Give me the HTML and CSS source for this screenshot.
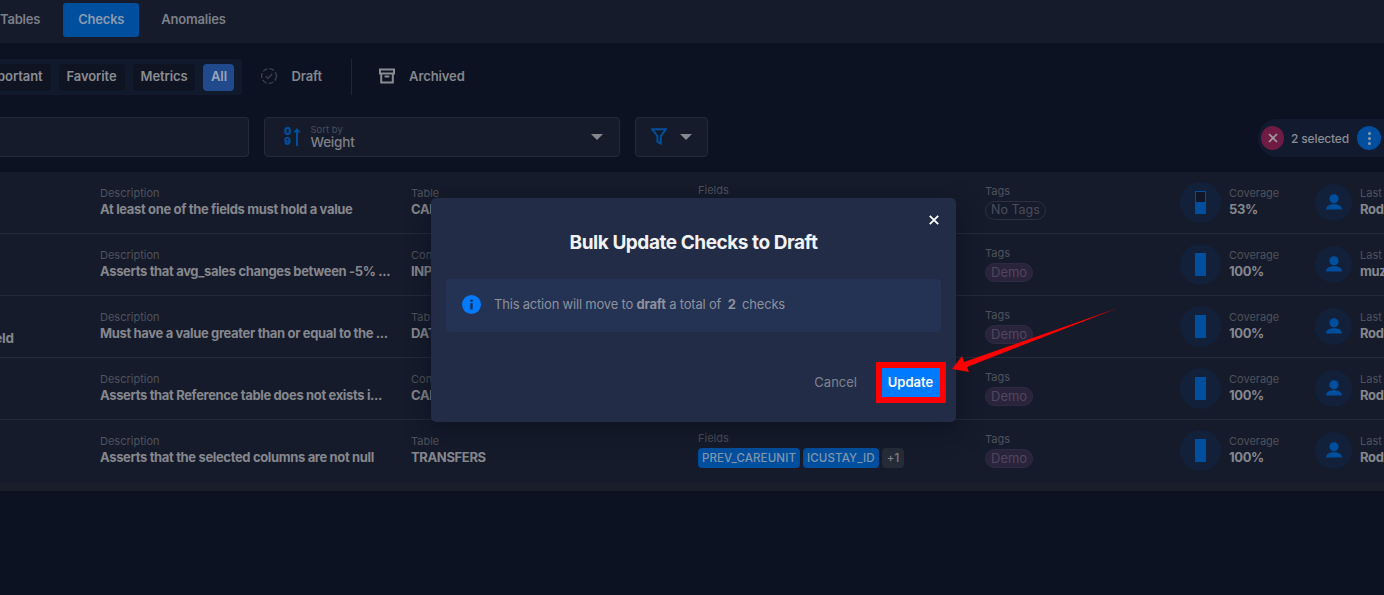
FILE: index.html
```html
<!DOCTYPE html>
<html lang="en">
<head>
<meta charset="utf-8">
<title>Checks</title>
<link rel="stylesheet" href="styles.css">
</head>
<body>
<div class="page">
  <nav class="tabs">
    <span class="tab tab-tables">Tables</span>
    <span class="tab tab-active">Checks</span>
    <span class="tab">Anomalies</span>
  </nav>

  <div class="filters">
    <div class="pill-group">
      <span class="pill pill-cut">Important</span>
      <span class="pill">Favorite</span>
      <span class="pill">Metrics</span>
      <span class="pill pill-on">All</span>
    </div>
    <div class="status status-draft">
      <svg class="i-draft" viewBox="0 0 18 18" width="18" height="18" fill="none" stroke="#3d424f" stroke-width="1.3"><circle cx="9" cy="9" r="7.4" stroke-dasharray="5 2"/><path d="M5.8 9.2l2.2 2.2 4.2-4.4"/></svg>
      <span>Draft</span>
    </div>
    <div class="divider"></div>
    <div class="status status-archived">
      <svg viewBox="0 0 16 16" width="16" height="16" fill="none" stroke="#8a8c92" stroke-width="2"><path d="M1 1.5h14v4H1zM2.2 5.5V14.5h11.6V5.5M5.6 8.6h4.8"/></svg>
      <span>Archived</span>
    </div>
  </div>

  <div class="controls">
    <div class="search"></div>
    <div class="sort">
      <span class="sort-icon">
        <span class="digits"><span>0</span><span>9</span></span>
        <svg viewBox="0 0 8 18" width="8" height="18" fill="#004f9e"><path d="M4 0l3.8 4.6H5V18H3V4.6H.2z"/></svg>
      </span>
      <span class="sort-text"><small>Sort by</small><b>Weight</b></span>
      <span class="caret caret-sort"></span>
    </div>
    <div class="filter-btn">
      <svg viewBox="0 0 16 18" width="16" height="18" fill="none" stroke="#004f9e" stroke-width="2"><path d="M1 1.2h14L9.8 8v7.6L6.4 13.6V8z"/></svg>
      <span class="caret"></span>
    </div>
    <div class="selected">
      <span class="sel-x"><svg viewBox="0 0 10 10" width="10" height="10" stroke="#a39aa0" stroke-width="1.7"><path d="M1 1l8 8M9 1l-8 8"/></svg></span>
      <span class="sel-text">2 selected</span>
      <span class="sel-more"><i></i><i></i><i></i></span>
    </div>
  </div>

  <div class="table">
    <div class="row">
      <div class="c0"></div>
      <div class="cell"><label>Description</label><strong>At least one of the fields must hold a value</strong></div>
      <div class="cell"><label>Table</label><strong>CAI</strong></div>
      <div class="cell cell-f"><label>Fields</label></div>
      <div class="cell cell-t"><label>Tags</label><span class="tag tag-none">No Tags</span></div>
      <div class="cov"><span class="bat"><span class="bat-fill f53"></span></span></div>
      <div class="cell"><label>Coverage</label><strong>53%</strong></div>
      <div class="usr"><svg viewBox="0 0 20 20" width="20" height="20" fill="#004f9e"><circle cx="10" cy="5.8" r="4.6"/><path d="M2 16.5c0-3.6 3.6-5.2 8-5.2s8 1.6 8 5.2z"/></svg></div>
      <div class="cell"><label>Last Editor</label><strong>Rodrigo</strong></div>
    </div>
    <div class="row">
      <div class="c0"></div>
      <div class="cell"><label>Description</label><strong>Asserts that avg_sales changes between -5% ...</strong></div>
      <div class="cell"><label>Con</label><strong>INP</strong></div>
      <div class="cell cell-f"></div>
      <div class="cell cell-t"><label>Tags</label><span class="tag">Demo</span></div>
      <div class="cov"><span class="bat"><span class="bat-fill"></span></span></div>
      <div class="cell"><label>Coverage</label><strong>100%</strong></div>
      <div class="usr"><svg viewBox="0 0 20 20" width="20" height="20" fill="#004f9e"><circle cx="10" cy="5.8" r="4.6"/><path d="M2 16.5c0-3.6 3.6-5.2 8-5.2s8 1.6 8 5.2z"/></svg></div>
      <div class="cell"><label>Last Editor</label><strong>muzammil</strong></div>
    </div>
    <div class="row">
      <div class="c0 c0-text">Field</div>
      <div class="cell"><label>Description</label><strong>Must have a value greater than or equal to the ...</strong></div>
      <div class="cell"><label>Tab</label><strong>DAT</strong></div>
      <div class="cell cell-f"></div>
      <div class="cell cell-t"><label>Tags</label><span class="tag">Demo</span></div>
      <div class="cov"><span class="bat"><span class="bat-fill"></span></span></div>
      <div class="cell"><label>Coverage</label><strong>100%</strong></div>
      <div class="usr"><svg viewBox="0 0 20 20" width="20" height="20" fill="#004f9e"><circle cx="10" cy="5.8" r="4.6"/><path d="M2 16.5c0-3.6 3.6-5.2 8-5.2s8 1.6 8 5.2z"/></svg></div>
      <div class="cell"><label>Last Editor</label><strong>Rodrigo</strong></div>
    </div>
    <div class="row">
      <div class="c0"></div>
      <div class="cell"><label>Description</label><strong>Asserts that Reference table does not exists i...</strong></div>
      <div class="cell"><label>Con</label><strong>CAL</strong></div>
      <div class="cell cell-f"></div>
      <div class="cell cell-t"><label>Tags</label><span class="tag">Demo</span></div>
      <div class="cov"><span class="bat"><span class="bat-fill"></span></span></div>
      <div class="cell"><label>Coverage</label><strong>100%</strong></div>
      <div class="usr"><svg viewBox="0 0 20 20" width="20" height="20" fill="#004f9e"><circle cx="10" cy="5.8" r="4.6"/><path d="M2 16.5c0-3.6 3.6-5.2 8-5.2s8 1.6 8 5.2z"/></svg></div>
      <div class="cell"><label>Last Editor</label><strong>Rodrigo</strong></div>
    </div>
    <div class="row row-last">
      <div class="c0"></div>
      <div class="cell"><label>Description</label><strong>Asserts that the selected columns are not null</strong></div>
      <div class="cell"><label>Table</label><strong>TRANSFERS</strong></div>
      <div class="cell cell-f"><label>Fields</label><div class="chips"><span class="chip">PREV_CAREUNIT</span><span class="chip">ICUSTAY_ID</span><span class="chip chip-more">+1</span></div></div>
      <div class="cell cell-t"><label>Tags</label><span class="tag">Demo</span></div>
      <div class="cov"><span class="bat"><span class="bat-fill"></span></span></div>
      <div class="cell"><label>Coverage</label><strong>100%</strong></div>
      <div class="usr"><svg viewBox="0 0 20 20" width="20" height="20" fill="#004f9e"><circle cx="10" cy="5.8" r="4.6"/><path d="M2 16.5c0-3.6 3.6-5.2 8-5.2s8 1.6 8 5.2z"/></svg></div>
      <div class="cell"><label>Last Editor</label><strong>Rodrigo</strong></div>
    </div>
    <div class="scroll-strip"></div>
  </div>

  <div class="modal">
    <svg class="modal-close" viewBox="0 0 10 10" width="10" height="10" stroke="#fff" stroke-width="1.8"><path d="M.8.8l8.4 8.4M9.2.8L.8 9.2"/></svg>
    <h2>Bulk Update Checks to Draft</h2>
    <div class="notice">
      <svg viewBox="0 0 20 20" width="19" height="19"><circle cx="10" cy="10" r="10" fill="#007bff"/><rect x="8.8" y="8.6" width="2.4" height="6.6" fill="#1f2b4a"/><rect x="8.8" y="4.8" width="2.4" height="2.4" fill="#1f2b4a"/></svg>
      <p>This action will move to <b>draft</b> a total of <b class="num">2</b> checks</p>
    </div>
    <div class="actions">
      <span class="cancel">Cancel</span>
      <span class="update-frame"><span class="update">Update</span></span>
    </div>
  </div>

  <svg class="arrow" viewBox="0 0 180 70" width="180" height="70"><polygon fill="#ff0000" points="172,2 21,61 23,66 6,63 16,50 18,56"/></svg>
</div>
</body>
</html>
```
FILE: styles.css
```css
* { box-sizing: border-box; }
html, body { margin: 0; height: 100%; }
body { background: #0d1222; overflow: hidden; font-family: Inter, "Liberation Sans", sans-serif; }
.page { position: relative; width: 1384px; height: 595px; overflow: hidden; }

.tabs { height: 43px; background: #151b2b; display: flex; align-items: flex-start; padding-top: 3px; }
.tab { height: 34px; display: flex; align-items: center; padding: 0 23px 2px 22px; font-size: 13px; font-weight: 600; letter-spacing: -.2px; color: #7c7f87; border-radius: 3px; }
.tab-tables { padding: 0 0 2px; margin-right: 23px; }
.tab-active { width: 76px; padding: 0 0 2px; justify-content: center; background: #004f9e; color: #8a9bb0; }

.filters { height: 66px; display: flex; align-items: flex-start; padding-top: 16px; }
.pill-group { display: flex; align-items: center; gap: 8px; height: 36px; padding: 0 8px 0 0; margin-left: -26px; background: #111a2c; border-radius: 0 4px 4px 0; }
.pill { height: 27px; display: flex; align-items: center; padding: 0 8px 2px; font-size: 13px; font-weight: 600; letter-spacing: -.1px; color: #8a8c92; background: #0f1423; border-radius: 4px; }
.pill-on { background: #214a8c; color: #9aa6ba; width: 31px; padding: 0 0 2px; justify-content: center; }
.status { display: flex; align-items: center; height: 36px; padding-bottom: 2px; font-size: 13px; font-weight: 600; letter-spacing: -.1px; color: #84868c; }
.status-draft { margin-left: 18px; gap: 13px; }
.divider { width: 1px; height: 36px; background: #20263a; margin: 0 27px 0 29px; }
.status-archived { gap: 14px; }

.controls { height: 63px; display: flex; align-items: flex-start; padding-top: 8px; }
.search { width: 249px; height: 40px; margin-right: 15px; background: #151b2b; border: 1px solid #252a38; border-left: 0; border-radius: 0 4px 4px 0; }
.sort { width: 356px; height: 40px; margin-right: 15px; background: #151b2b; border: 1px solid #252a38; border-radius: 4px; display: flex; align-items: center; padding: 0 16px 0 19px; }
.sort-icon { display: flex; align-items: center; gap: 2px; margin-right: 9px; }
.digits { display: flex; flex-direction: column; font-size: 10.5px; line-height: 10px; font-weight: 900; color: #004f9e; }
.sort-text { display: flex; flex-direction: column; flex: 1; }
.sort-text small { font-size: 9.5px; line-height: 11px; color: #4a4d58; }
.sort-text b { font-size: 13.5px; line-height: 15px; font-weight: 500; color: #7e8087; letter-spacing: -.2px; }
.caret { width: 0; height: 0; border-left: 6px solid transparent; border-right: 6px solid transparent; border-top: 6px solid #85878d; }
.filter-btn { width: 73px; height: 40px; background: #151b2b; border: 1px solid #252a38; border-radius: 4px; display: flex; align-items: center; gap: 13px; padding-left: 15px; }
.selected { margin-left: auto; margin-top: 2px; width: 126px; height: 38px; background: #121a2f; border-radius: 19px 0 0 19px; display: flex; align-items: center; padding-left: 3px; }
.sel-x { width: 23px; height: 24px; border-radius: 50%; background: #6e1c43; display: flex; align-items: center; justify-content: center; }
.sel-text { font-size: 12px; font-weight: 500; letter-spacing: -.15px; color: #8a8c92; margin-left: 7px; width: 62px; white-space: nowrap; }
.sel-more { width: 24px; height: 24px; border-radius: 50%; background: #004f9e; margin-left: 4px; display: flex; flex-direction: column; align-items: center; justify-content: center; gap: 2px; }
.sel-more i { width: 3px; height: 3px; border-radius: 50%; background: #8a9bb0; }

.row { height: 62px; background: #151b2b; border-bottom: 1px solid #252b3c; display: grid; grid-template-columns: 100px 311px 287px 287px 195px 49px 86px 45px 100px; white-space: nowrap; }
.row-last { border-bottom: 0; }
.c0-text { font-size: 13.5px; font-weight: 700; letter-spacing: -.2px; color: #84868c; padding-top: 34px; margin-left: -17px; }
.cell { padding-top: 15px; overflow: hidden; }
.cell label { display: block; font-size: 11px; line-height: 13px; color: #4f525c; }
.cell strong { display: block; font-size: 13px; line-height: 16px; margin-top: 1px; font-weight: 700; letter-spacing: -.35px; color: #85878d; }
.cell-f { padding-top: 12px; overflow: visible; }
.cell-t { padding-top: 13px; }
.chips { display: flex; gap: 3px; margin-top: 3px; }
.chip { height: 20px; display: flex; align-items: center; padding: 0 4px; font-size: 11.5px; font-weight: 500; letter-spacing: .12px; color: #8396ac; background: #004f9e; border-radius: 4px; }
.chip-more { background: #262b38; color: #7e8087; padding: 0 5px; }
.tag { display: inline-flex; align-items: center; height: 19px; margin-top: 3px; padding: 0 5px 1px; font-size: 13px; color: #52465f; background: #29233c; border: 1px solid #2f2a44; border-radius: 10px; }
.tag-none { margin-top: 2px; font-size: 12.5px; color: #4a4d58; background: transparent; border-color: #2b3040; }
.cov { display: flex; align-items: center; justify-content: center; width: 41px; height: 41px; margin-top: 10px; border-radius: 50%; background: #13203a; }
.bat { width: 11px; height: 23px; border: 1px solid #004f9e; background: #101728; display: flex; align-items: flex-end; }
.bat-fill { display: block; width: 100%; height: 100%; background: #004f9e; }
.bat-fill.f53 { height: 53%; }
.usr { width: 37px; height: 37px; margin-top: 12px; border-radius: 50%; background: #13203a; display: flex; align-items: center; justify-content: center; }
.scroll-strip { height: 9px; background: #1a1d2a; }

.modal { position: absolute; left: 431px; top: 198px; width: 525px; height: 224px; background: #222c47; border-radius: 5px; box-shadow: 0 8px 24px rgba(8,12,24,.55); padding: 0 15px; }
.modal-close { position: absolute; right: 17px; top: 17px; }
.modal h2 { margin: 32px 0 0; text-align: center; font-size: 19px; line-height: 25px; font-weight: 700; letter-spacing: -.45px; color: #f1f2f4; }
.notice { margin-top: 24px; height: 53px; background: #243254; border-radius: 4px; display: flex; align-items: center; padding: 0 0 2px 16px; gap: 13px; }
.notice p { margin: 0 0 2px; font-size: 13px; letter-spacing: -.2px; color: #8d919c; }
.notice b { font-weight: 700; }
.num { margin: 0 3px; }
.actions { display: flex; align-items: center; justify-content: flex-end; margin-top: 30px; margin-right: -5px; }
.cancel { font-size: 13px; padding-bottom: 2px; color: #7f838e; margin-right: 19px; }
.update-frame { display: block; border: 6px solid #ff0000; }
.update { display: flex; width: 58px; height: 29px; padding: 0 1px 1px 0; align-items: center; justify-content: center; background: #007bff; color: #fff; font-size: 13px; font-weight: 600; }
.arrow { position: absolute; left: 946px; top: 306px; }
```
